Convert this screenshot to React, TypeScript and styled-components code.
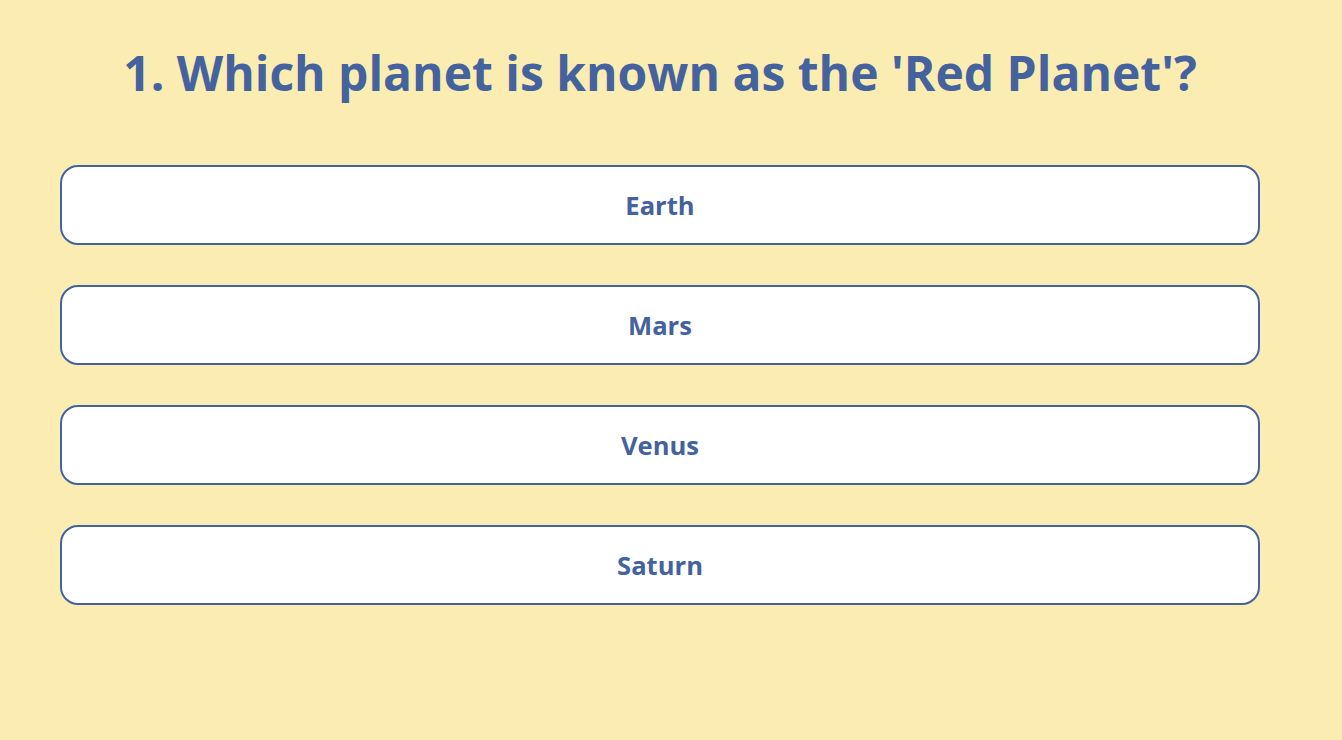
import React from 'react'
import styled, { createGlobalStyle } from 'styled-components'

const GlobalStyle = createGlobalStyle`
  html, body {
    margin: 0;
    padding: 0;
    background-color: #fbecb2;
  }
  body {
    font-family: 'Open Sans', 'Liberation Sans', sans-serif;
  }
`

const Page = styled.main`
  width: 1320px;
  min-height: 740px;
  box-sizing: border-box;
  padding: 0 60px;
  background-color: #fbecb2;
`

const Question = styled.h1`
  margin: 0;
  padding: 38px 0 0;
  height: 125px;
  box-sizing: border-box;
  text-align: center;
  font-size: 48px;
  font-weight: 700;
  line-height: 70px;
  color: #44629e;
`

const Options = styled.div`
  display: flex;
  flex-direction: column;
  gap: 40px;
  margin-top: 40px;
`

const Option = styled.button`
  height: 80px;
  width: 100%;
  border: 2px solid #44629e;
  border-radius: 18px;
  background: #ffffff;
  color: #44629e;
  font-family: 'Open Sans', 'Liberation Sans', sans-serif;
  font-size: 25.6px;
  font-weight: 700;
  cursor: pointer;
`

const answers = ['Earth', 'Mars', 'Venus', 'Saturn']

export default function App() {
  return (
    <>
      <GlobalStyle />
      <Page>
        <Question>1. Which planet is known as the 'Red Planet'?</Question>
        <Options>
          {answers.map((a) => (
            <Option key={a}>{a}</Option>
          ))}
        </Options>
      </Page>
    </>
  )
}
